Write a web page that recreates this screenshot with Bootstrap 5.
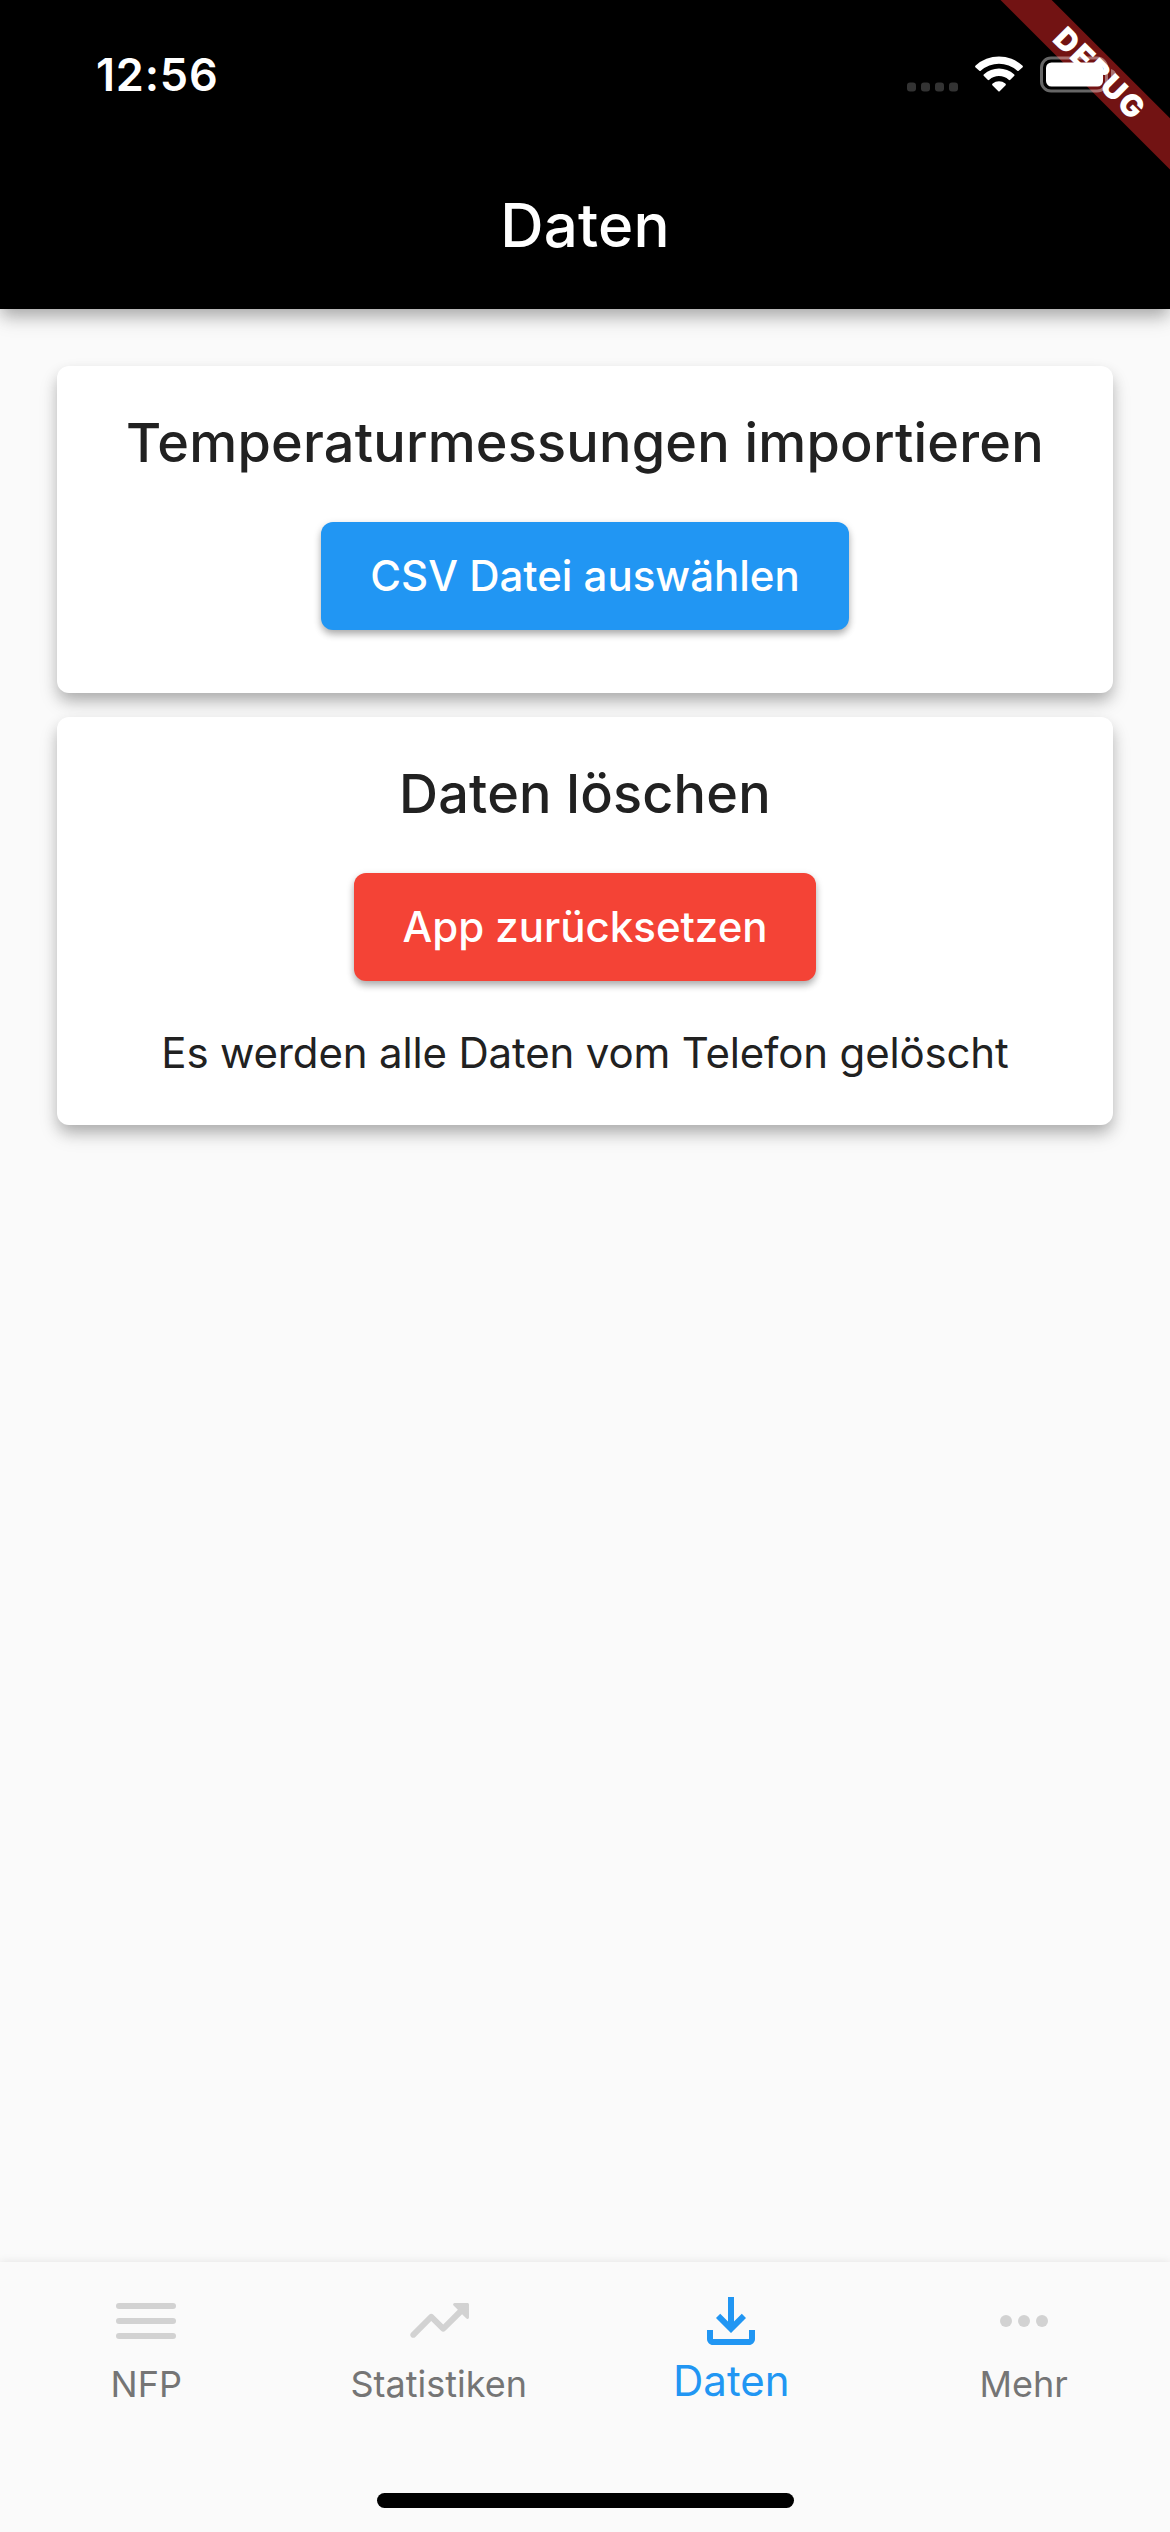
<!DOCTYPE html>
<html lang="de">
<head>
<meta charset="utf-8">
<meta name="viewport" content="width=device-width, initial-scale=1">
<title>Daten</title>
<link href="https://cdn.jsdelivr.net/npm/bootstrap@5.3.0/dist/css/bootstrap.min.css" rel="stylesheet">
<style>
body{font-family:Inter,"Liberation Sans",sans-serif;background:#fafafa;color:#212121}
.screen{height:2532px;overflow:hidden}
.app-header{background:#000;height:309px;color:#fff;box-shadow:0 8px 15px -2px rgba(0,0,0,.24),0 10px 20px rgba(0,0,0,.12)}
.ribbon{position:absolute;top:0;right:0}
.ribbon text{font:900 30.6px Inter,sans-serif}
.status-row{height:141px;padding:9px 55px 0 96px}
.clock{font-size:45px;font-weight:600;line-height:60px;letter-spacing:.8px}
.app-title{height:168px;font-size:60px;font-weight:500;line-height:168px;letter-spacing:.2px}
.page-body{padding:57px 57px 0;gap:24px}
.panel{--bs-card-border-width:0;--bs-card-border-radius:12px;background:#fff;padding:45px 0 47px;box-shadow:0 8px 15px -2px rgba(0,0,0,.24),0 10px 20px rgba(0,0,0,.12)}
.panel-import{padding-bottom:63px}
.panel h2{font-size:54px;font-weight:500;line-height:64px;margin:0 0 47px;letter-spacing:.2px}
.action{--bs-btn-padding-y:0;--bs-btn-border-width:0;--bs-btn-border-radius:12px;--bs-btn-font-size:42px;--bs-btn-font-weight:500;--bs-btn-color:#fff;height:108px;padding-bottom:2px;box-shadow:0 3px 9px -1px rgba(0,0,0,.25),0 5px 7px rgba(0,0,0,.16)}
.pick{width:528px;background:#2196f3}
.reset{width:462px;background:#f44336}
.hint{font-size:42px;line-height:50px;margin:47px 0 0;letter-spacing:-.16px}
.tabs{height:270px;padding-top:23px;background:#fafafa;box-shadow:0 -1px 8px rgba(0,0,0,.08)}
.tabs .nav-link{padding:0;color:#757575;font-size:36px;line-height:54px}
.tabs .nav-link svg{fill:#d2d2d2;display:block}
.tabs .nav-link.active{color:#2196f3;font-size:42px;line-height:48px}
.tabs .nav-link.active svg{fill:#2196f3}
.home-bar{width:417px;height:15px;border-radius:8px;background:#000;margin-bottom:24px}
</style>
<script src="https://cdn.jsdelivr.net/npm/bootstrap@5.3.0/dist/js/bootstrap.bundle.min.js"></script>
</head>
<body>
<div class="screen d-flex flex-column">
<header class="app-header position-relative flex-shrink-0">
  <svg class="ribbon" width="170" height="170" viewBox="1000 0 170 170" aria-hidden="true">
    <path fill="#721313" d="M1000.5 0h51.2L1170 118.300v51.200z"/>
    <text fill="#fff" transform="translate(1051.3 40.4) rotate(45)" textLength="114">DEBUG</text>
  </svg>
  <div class="status-row position-relative d-flex justify-content-between align-items-center">
    <span class="clock">12:56</span>
    <svg width="208" height="36" viewBox="907 56.500 208 36" overflow="visible" aria-hidden="true">
      <g fill="#333"><rect x="907" y="82" width="9" height="9" rx="3"/><rect x="921" y="82" width="9" height="9" rx="3"/><rect x="935" y="82" width="9" height="9" rx="3"/><rect x="949" y="82" width="9" height="9" rx="3"/></g>
      <g fill="#fff" transform="translate(870 0) scale(.33333)">
        <path d="M316 200Q314 197 317 195A104 104 0 0 1 457 195Q460 197 458 200L446 211Q444 213 441 210A82 82 0 0 0 333 210Q330 213 328 211Z"/>
        <path d="M341 226Q339 223 342 221A67 67 0 0 1 432 221Q435 223 433 226L421 238Q419 240 416 238A43 43 0 0 0 358 238Q355 240 353 238Z"/>
        <path d="M367 254Q365 251 368 249A30 30 0 0 1 406 249Q409 251 407 254L389 272Q387 274 385 272Z"/>
      </g>
      <rect x="1041.500" y="57.500" width="65" height="33" rx="9.500" fill="none" stroke="#fff" stroke-opacity=".4" stroke-width="3"/>
      <path d="M1111 68.500q5 1.500 5 5.500t-5 5.500z" fill="#fff" fill-opacity=".4"/>
      <rect x="1046" y="62" width="57" height="24" rx="5.500" fill="#fff"/>
    </svg>
  </div>
  <h1 class="app-title text-center m-0">Daten</h1>
</header>
<main class="page-body flex-grow-1 d-flex flex-column">
  <section class="card panel panel-import align-items-center text-center">
    <h2>Temperaturmessungen importieren</h2>
    <button type="button" class="btn action pick">CSV Datei auswählen</button>
  </section>
  <section class="card panel align-items-center text-center">
    <h2>Daten löschen</h2>
    <button type="button" class="btn action reset">App zurücksetzen</button>
    <p class="hint">Es werden alle Daten vom Telefon gelöscht</p>
  </section>
</main>
<footer class="tabs flex-shrink-0 d-flex flex-column justify-content-between align-items-center">
  <nav class="nav nav-justified w-100 align-items-start">
    <a class="nav-link nav-item d-flex flex-column align-items-center" href="#"><svg width="72" height="72" viewBox="0 0 24 24"><rect x="2" y="6" width="20" height="2" rx="1"/><rect x="2" y="11" width="20" height="2" rx="1"/><rect x="2" y="16" width="20" height="2" rx="1"/></svg>NFP</a>
    <a class="nav-link nav-item d-flex flex-column align-items-center" href="#"><svg width="72" height="72" viewBox="0 0 24 24"><path d="M16.850 6.850l1.440 1.440-4.880 4.880-3.290-3.290c-.39-.39-1.020-.39-1.410 0l-6 6.010c-.39.39-.39 1.020 0 1.410.39.39 1.020.39 1.410 0L9.410 12l3.290 3.290c.39.39 1.020.39 1.410 0l5.590-5.580 1.440 1.440c.31.31.85.09.85-.35V6.500c.01-.28-.21-.5-.49-.5h-4.290c-.45 0-.67.54-.36.85z"/></svg>Statistiken</a>
    <a class="nav-link nav-item active d-flex flex-column align-items-center" href="#"><svg width="72" height="72" viewBox="0 0 24 24"><path d="M18 15v3H6v-3H4v3c0 1.100.9 2 2 2h12c1.100 0 2-.9 2-2v-3h-2zm-1-4l-1.410-1.410L13 12.170V4h-2v8.170L8.410 9.590 7 11l5 5 5-5z"/></svg>Daten</a>
    <a class="nav-link nav-item d-flex flex-column align-items-center" href="#"><svg width="72" height="72" viewBox="0 0 24 24"><circle cx="6" cy="12" r="2"/><circle cx="12" cy="12" r="2"/><circle cx="18" cy="12" r="2"/></svg>Mehr</a>
  </nav>
  <div class="home-bar"></div>
</footer>
</div>
</body>
</html>
